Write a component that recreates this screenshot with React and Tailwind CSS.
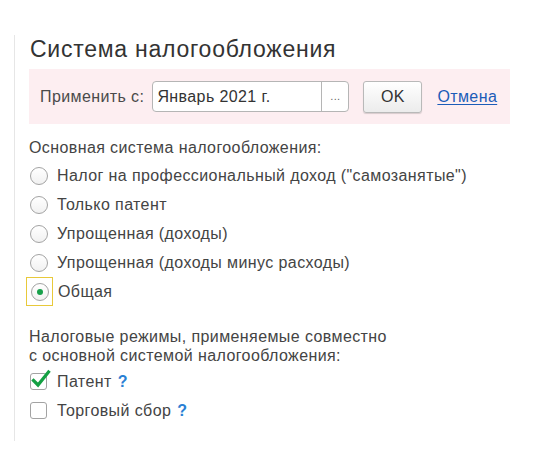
const modes = [
  'Налог на профессиональный доход ("самозанятые")',
  'Только патент',
  'Упрощенная (доходы)',
  'Упрощенная (доходы минус расходы)',
  'Общая',
];

function Radio({ checked }) {
  return (
    <span className="w-[18px] h-[18px] rounded-full border border-[#a3a3a3] bg-gradient-to-b from-white to-[#f1f1f1] flex items-center justify-center shrink-0">
      {checked && <span className="w-[6px] h-[6px] rounded-full bg-[#17a04a]" />}
    </span>
  );
}

function Checkbox({ checked }) {
  return (
    <span className="relative w-[17px] h-[17px] rounded-[3px] border border-[#a3a3a3] bg-white shrink-0">
      {checked && (
        <svg className="absolute -left-[1px] -top-[5px] w-[21px] h-[21px]" viewBox="0 0 21 21" fill="none">
          <path d="M3.5 11.5 L8 16 L18.5 3" stroke="#14a043" strokeWidth="3.2" strokeLinecap="square" />
        </svg>
      )}
    </span>
  );
}

function Help() {
  return <span className="ml-[6px] text-[#2a7fd4] font-bold text-[16px]">?</span>;
}

export default function App() {
  const selected = 4;
  return (
    <div className="w-[539px] h-[457px] bg-white pt-[35px] pl-[14px] font-['Liberation_Sans',Arial,sans-serif] text-[#444] tracking-[0.4px]">
      <div className="h-[406px] border-l border-[#e6e6e6] pl-[14px]">
        {/* Заголовок */}
        <h1 className="pt-[2px] ml-[1px] text-[23px] leading-[24px] tracking-[0.75px] text-[#333]">Система налогообложения</h1>

        {/* Панель применения */}
        <div className="mt-[8px] h-[55px] w-[481px] bg-[#fdeef1] flex items-center pl-[11px]">
          <span className="text-[16px] text-[#4a4a4a]">Применить с:</span>
          <div className="ml-[8px] flex h-[31px] w-[197px] border border-[#b5b5b5] rounded-[4px] bg-white overflow-hidden">
            <div className="flex-1 flex items-center pl-[4px] text-[16px] text-[#333]">Январь 2021 г.</div>
            <div className="w-[27px] border-l border-[#b5b5b5] flex items-end justify-center pb-[7px] text-[11px] text-[#666]">...</div>
          </div>
          <button className="ml-[14px] w-[59px] h-[32px] rounded-[3px] border border-[#b9b9b9] bg-gradient-to-b from-white to-[#ececec] shadow-[0_1px_1px_rgba(0,0,0,0.15)] text-[16px] text-[#333]">
            OK
          </button>
          <a className="ml-[15px] text-[16px] text-[#1c5cb8] underline underline-offset-2">Отмена</a>
        </div>

        {/* Основная система */}
        <div className="mt-[14px] text-[16px] leading-[19px]">Основная система налогообложения:</div>
        <div className="mt-[4px] flex flex-col">
          {modes.map((m, i) => (
            <div key={m} className="h-[29px] flex items-center text-[16px]">
              {i === selected ? (
                <span className="-ml-[3px] w-[27px] h-[29px] border border-[#e8c93a] flex items-center justify-center">
                  <Radio checked />
                </span>
              ) : (
                <span className="ml-[1px] w-[18px] flex">
                  <Radio />
                </span>
              )}
              <span className={i === selected ? 'ml-[5px]' : 'ml-[9px]'}>{m}</span>
            </div>
          ))}
        </div>

        {/* Дополнительные режимы */}
        <div className="mt-[21px] text-[16px] leading-[19px]">
          Налоговые режимы, применяемые совместно
          <br />
          с основной системой налогообложения:
        </div>
        <div className="mt-[2px] flex flex-col">
          <div className="h-[29px] flex items-center text-[16px]">
            <span className="ml-[1px] flex"><Checkbox checked /></span>
            <span className="ml-[10px]">Патент</span>
            <Help />
          </div>
          <div className="h-[29px] flex items-center text-[16px]">
            <span className="ml-[1px] flex"><Checkbox /></span>
            <span className="ml-[10px]">Торговый сбор</span>
            <Help />
          </div>
        </div>
      </div>
    </div>
  );
}
